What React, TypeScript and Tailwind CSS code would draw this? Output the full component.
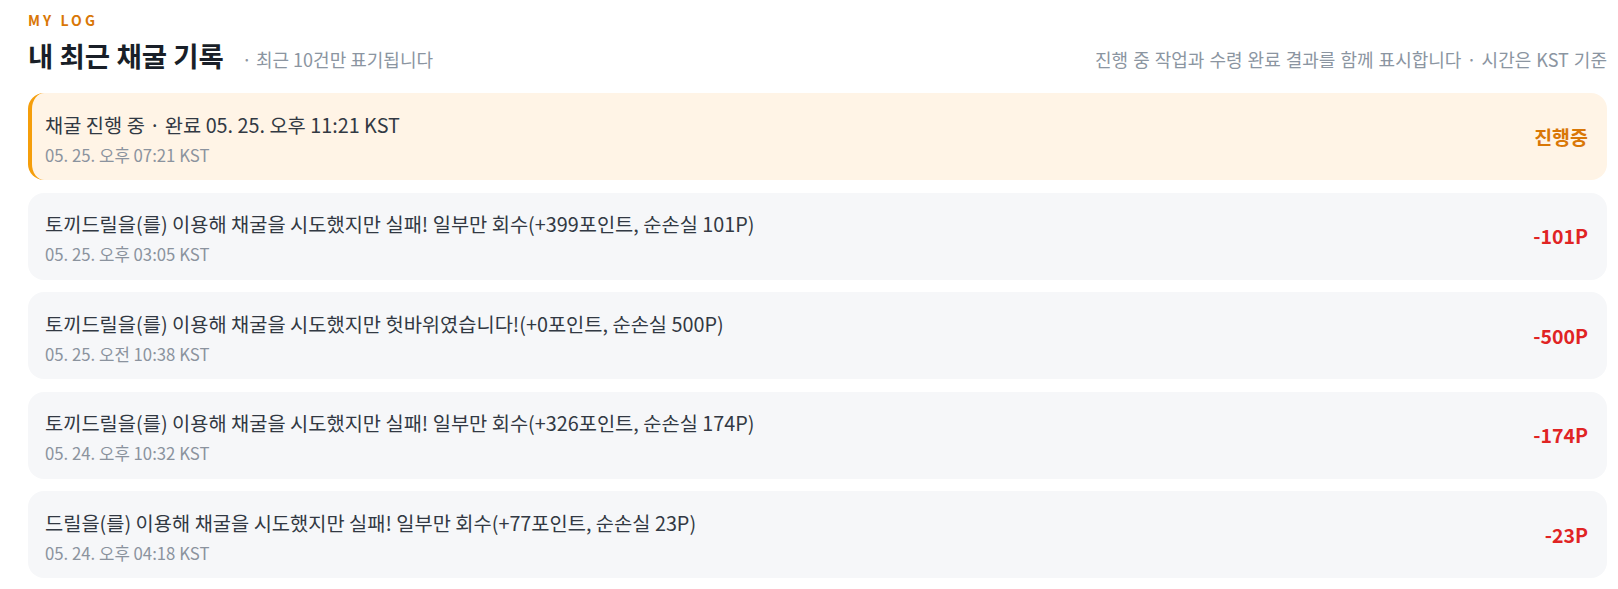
import React from "react";

type LogItem = {
  message: string;
  time: string;
  value: string;
  active?: boolean;
};

const logs: LogItem[] = [
  {
    message: "채굴 진행 중 · 완료 05. 25. 오후 11:21 KST",
    time: "05. 25. 오후 07:21 KST",
    value: "진행중",
    active: true,
  },
  {
    message: "토끼드릴을(를) 이용해 채굴을 시도했지만 실패! 일부만 회수(+399포인트, 순손실 101P)",
    time: "05. 25. 오후 03:05 KST",
    value: "-101P",
  },
  {
    message: "토끼드릴을(를) 이용해 채굴을 시도했지만 헛바위였습니다!(+0포인트, 순손실 500P)",
    time: "05. 25. 오전 10:38 KST",
    value: "-500P",
  },
  {
    message: "토끼드릴을(를) 이용해 채굴을 시도했지만 실패! 일부만 회수(+326포인트, 순손실 174P)",
    time: "05. 24. 오후 10:32 KST",
    value: "-174P",
  },
  {
    message: "드릴을(를) 이용해 채굴을 시도했지만 실패! 일부만 회수(+77포인트, 순손실 23P)",
    time: "05. 24. 오후 04:18 KST",
    value: "-23P",
  },
];

function LogRow({ item }: { item: LogItem }) {
  return (
    <div
      className={
        item.active
          ? "flex h-[87px] items-center justify-between rounded-2xl border-l-4 border-[#f59e0b] bg-[#fff4e6] pl-[13px] pr-[19px]"
          : "flex h-[87px] items-center justify-between rounded-2xl bg-[#f6f7f9] pl-[17px] pr-[19px]"
      }
    >
      <div className="pt-[3px]">
        <div className="text-[19.8px] leading-[27px] text-[#323943]">{item.message}</div>
        <div className="mt-[6px] text-[16.75px] leading-[22px] text-[#8b939e]">{item.time}</div>
      </div>
      <div
        className={
          item.active
            ? "text-[19.5px] font-bold text-[#d97706]"
            : "text-[19.5px] font-bold text-[#e02424]"
        }
      >
        {item.value}
      </div>
    </div>
  );
}

export default function App() {
  return (
    <div
      className="min-h-screen bg-white pl-[28px] pr-[11px] pt-[12px]"
      style={{ fontFamily: '"Noto Sans CJK KR", "Noto Sans", sans-serif' }}
    >
      {/* Header */}
      <div className="text-[14px] font-bold leading-4 tracking-[0.22em] text-[#d97706]">MY LOG</div>
      <div className="mt-[10px] flex items-baseline justify-between">
        <div className="flex items-baseline">
          <h2 className="text-[27.5px] font-bold leading-[34px] text-[#191f28]">내 최근 채굴 기록</h2>
          <span className="ml-[18px] text-[18px] text-[#8b95a1]">· 최근 10건만 표기됩니다</span>
        </div>
        <span className="text-[18px] text-[#8b95a1] [word-spacing:1px]">
          진행 중 작업과 수령 완료 결과를 함께 표시합니다 · 시간은 KST 기준
        </span>
      </div>

      {/* Log list */}
      <div className="mt-5 flex flex-col gap-[12.5px]">
        {logs.map((item, i) => (
          <LogRow key={i} item={item} />
        ))}
      </div>
    </div>
  );
}
